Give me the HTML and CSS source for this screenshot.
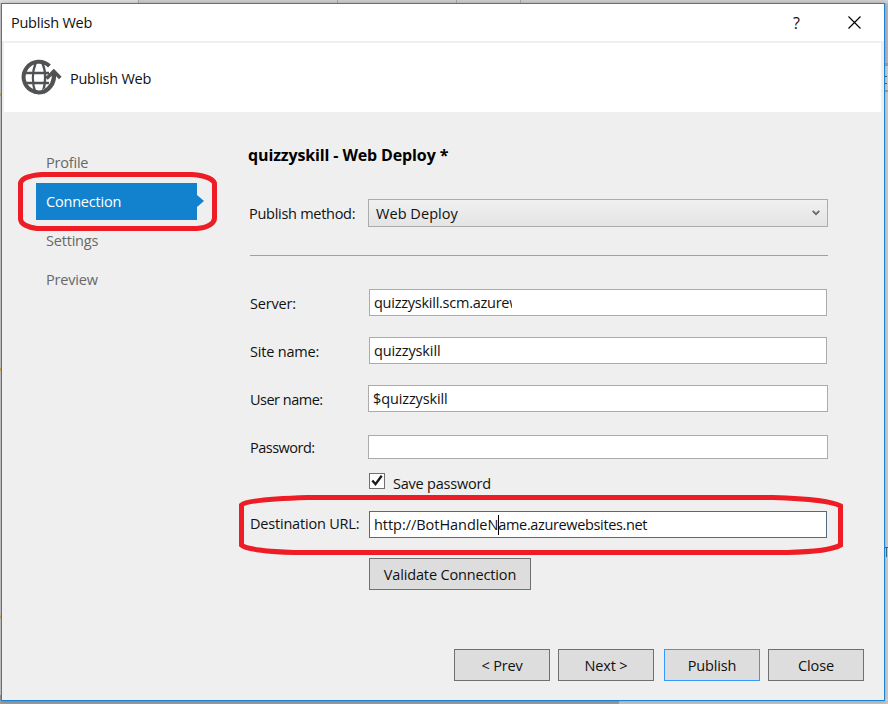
FILE: index.html
```html
<!DOCTYPE html>
<html lang="en">
<head>
<meta charset="utf-8">
<title>Publish Web</title>
<link rel="stylesheet" href="styles.css">
</head>
<body>
<div class="desktop">
  <svg class="backdrop" width="888" height="704" aria-hidden="true">
    <rect width="888" height="704" fill="#d2d2d4"/>
    <rect width="138" height="3" fill="#e2e2e2"/>
    <path d="M138.500 0v3M337.500 0v3M456.500 0v3M520.500 0v3" stroke="#aaaab2"/>
    <rect y="695" width="619" height="9" fill="#9e9da2"/>
    <rect x="619" y="701" width="269" height="3" fill="#c6c6c9"/>
    <rect x="885" y="3" width="3" height="60" fill="#babac4"/>
    <rect x="885" y="63" width="3" height="3" fill="#a2a2ad"/>
    <rect x="885" y="90" width="3" height="2" fill="#a5a5a8"/>
    <path d="M885 76.500h2M885 83.500h2M885 547.500h3M886.500 548v9" stroke="#357089"/>
    <path d="M0 94.500h1M0 369.500h1M0 617h1" stroke="#d2b45f" stroke-width="3"/>
  </svg>
  <div class="window">
    <header class="titlebar">
      <span class="title">Publish Web</span>
      <span class="help">?</span>
      <svg class="close" width="13" height="13" viewBox="0 0 13 13"><path d="M.5 .5l12 12M12.500 .5l-12 12" stroke="#000" stroke-width="1.150"/></svg>
    </header>
    <div class="banner">
      <svg class="globe" width="42" height="38" viewBox="0 0 42 38" fill="none" stroke="#505254">
        <path d="M28.500 7A15.300 15.300 0 1 0 32 24" stroke-width="4"/>
        <path d="M4 14h24M4 24h24" stroke-width="2.500"/>
        <path d="M14.800 3.500C11 13 11 25 14.800 34.500M21 3.500C23.700 9 24.300 14 24.100 19C24 25 23 30 21 34.500" stroke-width="2.400"/>
        <path d="M33.500 13.500C34.500 22 31 29 23.500 33.500" stroke="#fff" stroke-width="6.500"/>
        <path d="M32.800 13C34 22 30 29 22.500 33" stroke-width="4.200"/>
        <path d="M25.500 19.500l7.300-7.200 6.500 6.700" stroke-width="3.600"/>
      </svg>
      <span>Publish Web</span>
    </div>
    <div class="content">
      <nav class="steps">
        <a class="step">Profile</a>
        <a class="step active">Connection</a>
        <a class="step">Settings</a>
        <a class="step">Preview</a>
      </nav>
      <main class="form">
        <h1>quizzyskill - Web Deploy *</h1>
        <div class="row method">
          <label>Publish method:</label>
          <div class="select"><span>Web Deploy</span>
            <svg width="8" height="6" viewBox="0 0 8 6"><path d="M.7 .8L4 4.200 7.300 .8" fill="none" stroke="#666" stroke-width="1.700"/></svg>
          </div>
        </div>
        <hr>
        <div class="row"><label>Server:</label><div class="field inset"><span class="clip">quizzyskill.scm.azurew</span></div></div>
        <div class="row"><label>Site name:</label><div class="field inset">quizzyskill</div></div>
        <div class="row tight"><label>User name:</label><div class="field">$quizzyskill</div></div>
        <div class="row tight"><label>Password:</label><div class="field short"></div></div>
        <div class="check">
          <span class="box"><svg width="14" height="13" viewBox="0 0 14 13"><path d="M2.300 6.500l3.200 3.700L11.700 1.800" fill="none" stroke="#1c1c1c" stroke-width="2.400"/></svg></span>
          <span class="check-text">Save password</span>
        </div>
        <div class="row dest"><label>Destination URL:</label><div class="field inset focus"><span class="url-start">http://BotHandleN</span><i class="caret"></i><span class="url-end">ame.azurewebsites.net</span></div></div>
        <button class="validate">Validate Connection</button>
      </main>
    </div>
    <footer class="actions">
      <button>&lt; Prev</button>
      <button>Next &gt;</button>
      <button class="primary">Publish</button>
      <button>Close</button>
    </footer>
  </div>
  <svg class="marks" width="888" height="704" fill="none" stroke="#ee1c24" stroke-width="5" aria-hidden="true">
    <path d="M42 174.500H192C207 175.500 214.500 180 214.500 184V218C214.500 223 208 228 197 228.500H37C28 227.500 20.500 224 20.500 219V184C20.500 179 28 175.500 42 174.500Z"/>
    <path d="M308 497.500H773C805 498.500 832 501 840.500 506V545C833 549.500 810 552 787 552.500H294C268 552 245 549 241.500 545V505C246 501 275 498.500 308 497.500Z"/>
  </svg>
</div>
</body>
</html>
```
FILE: styles.css
```css
* { box-sizing: border-box; }
body {
  margin: 0;
  font: 14.5px/20px "Open Sans", "Noto Sans", sans-serif;
  letter-spacing: -0.25px;
  color: #111;
}
.desktop { position: relative; width: 888px; height: 704px; padding: 3px 0 0 1px; overflow: hidden; }
.backdrop, .marks { position: absolute; left: 0; top: 0; }
.window {
  position: relative;
  display: flex;
  flex-direction: column;
  width: 884px;
  height: 698px;
  border: 1px solid #1883d7;
  background: #efefef;
  box-shadow: 0 0 5px rgba(0, 0, 0, .25);
}
.titlebar { display: flex; align-items: center; height: 37px; padding: 0 23px 0 9px; background: #fff; }
.title { flex: 1; }
.help { width: 55px; font-size: 16px; }
.close { display: block; margin-top: -1px; }
.banner { display: flex; align-items: center; gap: 7px; height: 69px; margin: 2px 3px 0 2px; padding-left: 17px; background: #fff; }
.banner span { padding-top: 2px; }
.globe { display: block; }
.content { display: flex; height: 517px; }
.steps { display: flex; flex-direction: column; gap: 2px; width: 161px; margin: 32px 0 0 34px; }
.step { display: block; position: relative; height: 37px; padding: 9px 10px; color: #686868; letter-spacing: -0.2px; }
.step.active { background: #1382ce; color: #fff; }
.step.active::after {
  content: "";
  position: absolute;
  left: 100%;
  top: 12px;
  border: 6.5px solid transparent;
  border-left: 7px solid #1382ce;
  border-right: 0;
}
.form { width: 580px; margin-left: 51px; padding-top: 33px; }
h1 { margin: 0 0 34px; font-size: 16px; line-height: 20px; letter-spacing: -0.13px; color: #000; }
.row { display: flex; align-items: flex-start; height: 48px; padding-left: 2px; }
.row label { width: 118px; padding-top: 5px; white-space: nowrap; letter-spacing: -0.2px; }
.row.tight label { letter-spacing: -0.5px; }
.method { height: 56px; padding-left: 1px; }
.method label { width: 119px; letter-spacing: -0.28px; }
.select {
  display: flex;
  align-items: center;
  justify-content: space-between;
  width: 460px;
  height: 28px;
  padding: 0 7px;
  border: 1px solid #acacac;
  background: linear-gradient(#f0f0f0, #e4e4e4);
}
.select span { padding-top: 2px; letter-spacing: 0.05px; }
hr { height: 1px; margin: 0 0 33px 2px; border: 0; background: #a0a0a0; }
.field {
  display: flex;
  width: 460px;
  height: 27px;
  padding: 3px 4px;
  border: 1px solid #ababab;
  background: #fff;
  line-height: 20px;
  letter-spacing: -0.12px;
}
.inset { width: 458px; margin-left: 1px; }
.short { height: 24px; margin-top: 2px; }
.clip { width: 138px; overflow: hidden; white-space: nowrap; letter-spacing: -0.25px; }
.focus { border-color: #566a7f; }
.url-start { letter-spacing: -0.04px; }
.url-end { letter-spacing: -0.36px; }
.caret { width: 1px; height: 20px; margin-right: -1px; background: #000; }
.check { display: flex; gap: 8px; height: 30px; margin: -8px 0 0 121px; }
.check-text { padding-top: 1px; letter-spacing: -0.22px; }
.box { width: 16px; height: 16px; border: 1px solid #707070; background: #fff; }
.box svg { display: block; }
.dest { height: 47px; margin-top: 8px; }
.dest label { padding-top: 3px; }
button {
  width: 96px;
  height: 32px;
  padding: 2px 0 0;
  border: 1px solid #707070;
  background: #ddd;
  font: inherit;
  letter-spacing: -0.15px;
  color: #111;
}
.validate { display: block; width: 162px; margin-left: 121px; }
.actions { display: flex; gap: 8px; justify-content: flex-end; padding: 20px 20px 0 0; }
.primary { margin-left: 2px; border-color: #3399ff; }
```
